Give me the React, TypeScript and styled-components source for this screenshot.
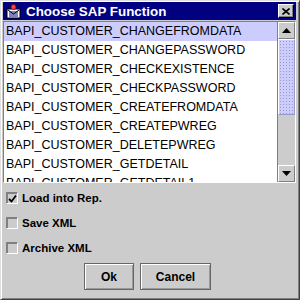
import React from "react";
import styled, { createGlobalStyle } from "styled-components";

const Global = createGlobalStyle`
  html, body { margin: 0; padding: 0; background: #cccccc; }
  * { box-sizing: border-box; }
`;

const Window = styled.div`
  width: 300px;
  height: 300px;
  background: #cccccc;
  border: 1px solid;
  border-color: #dfdfdf #404040 #404040 #dfdfdf;
  box-shadow: inset 1px 1px 0 #ffffff, inset -1px -1px 0 #808080;
  padding: 1px 3px 3px 2px;
  display: flex;
  flex-direction: column;
  overflow: hidden;
  font-family: "Liberation Sans", Arial, sans-serif;
`;

const TitleBar = styled.div`
  flex: none;
  height: 18px;
  background: #000080;
  display: flex;
  align-items: center;
  padding: 0 2px 0 3px;
  gap: 5px;
`;

const Title = styled.div`
  color: #ffffff;
  font-weight: bold;
  font-size: 13.4px;
  flex: 1;
`;

const CloseBtn = styled.div`
  width: 16px;
  height: 14px;
  background: #cccccc;
  border: 1px solid;
  border-color: #ffffff #000000 #000000 #ffffff;
  box-shadow: inset -1px -1px 0 #808080;
  display: flex;
  align-items: center;
  justify-content: center;
`;

const ListFrame = styled.div`
  flex: none;
  margin-top: 1px;
  height: 162px;
  display: flex;
  border: 1px solid;
  border-color: #808080 #ffffff #ffffff #808080;
`;

const List = styled.div`
  flex: 1;
  background: #ffffff;
  overflow: hidden;
  border-right: 1px solid #808080;
`;

const Row = styled.div<{ $sel?: boolean }>`
  height: 19px;
  line-height: 19px;
  padding-left: 2px;
  font-size: 12.5px;
  color: #000000;
  white-space: nowrap;
  background: ${(p) => (p.$sel ? "#ccccff" : "#ffffff")};
`;

const ScrollBar = styled.div`
  width: 17px;
  display: flex;
  flex-direction: column;
  background: #cccccc;
`;

const ArrowBtn = styled.div`
  height: 17px;
  background: #cccccc;
  border: 1px solid;
  border-color: #ffffff #808080 #808080 #ffffff;
  display: flex;
  align-items: center;
  justify-content: center;
`;

const Thumb = styled.div`
  height: 76px;
  background-color: #ccccff;
  background-image: radial-gradient(#9999cc 0.8px, transparent 0.9px);
  background-size: 3px 3px;
  border: 1px solid;
  border-color: #ffffff #9999cc #9999cc #ffffff;
`;

const Track = styled.div`
  flex: 1;
  background: #cccccc;
`;

const Options = styled.div`
  flex: none;
  display: flex;
  flex-direction: column;
  gap: 13px;
  padding: 9px 0 0 3px;
`;

const CheckRow = styled.div`
  display: flex;
  align-items: center;
  gap: 4px;
  height: 12px;
`;

const Box = styled.div`
  width: 12px;
  height: 12px;
  border: 1px solid;
  border-color: #808080 #ffffff #ffffff #808080;
  box-shadow: inset 1px 1px 0 #808080;
  background: #cccccc;
  display: flex;
  align-items: center;
  justify-content: center;
`;

const Label = styled.span`
  font-size: 11.5px;
  font-weight: bold;
  color: #000000;
`;

const ButtonRow = styled.div`
  flex: none;
  display: flex;
  justify-content: center;
  gap: 6px;
  margin-top: 9px;
  padding-right: 4px;
`;

const Button = styled.div<{ $w: number }>`
  width: ${(p) => p.$w}px;
  height: 27px;
  border: 1px solid #666666;
  box-shadow: inset 1px 1px 0 #ffffff, inset -1px -1px 0 #999999;
  background: #cccccc;
  display: flex;
  align-items: center;
  justify-content: center;
  font-size: 12px;
  font-weight: bold;
  color: #000000;
`;

const items = [
  "BAPI_CUSTOMER_CHANGEFROMDATA",
  "BAPI_CUSTOMER_CHANGEPASSWORD",
  "BAPI_CUSTOMER_CHECKEXISTENCE",
  "BAPI_CUSTOMER_CHECKPASSWORD",
  "BAPI_CUSTOMER_CREATEFROMDATA",
  "BAPI_CUSTOMER_CREATEPWREG",
  "BAPI_CUSTOMER_DELETEPWREG",
  "BAPI_CUSTOMER_GETDETAIL",
  "BAPI_CUSTOMER_GETDETAIL1",
];

const AppIcon = () => (
  <svg width="15" height="15" viewBox="0 0 15 15">
    <rect x="1" y="5" width="13" height="9" fill="#ffffff" stroke="#000000" strokeWidth="1" />
    <path d="M3 8h9M3 10h9M3 12h9" stroke="#000080" strokeWidth="1" />
    <circle cx="7.5" cy="3" r="2.5" fill="#ff4040" stroke="#800000" strokeWidth="0.8" />
    <path d="M2 6 L7.5 10 L13 6" stroke="#000000" fill="none" strokeWidth="1" />
  </svg>
);

export default function App() {
  return (
    <>
      <Global />
      <Window>
        <TitleBar>
          <AppIcon />
          <Title>Choose SAP Function</Title>
          <CloseBtn>
            <svg width="8" height="7" viewBox="0 0 8 7">
              <path d="M0.5 0.5 L7.5 6.5 M7.5 0.5 L0.5 6.5" stroke="#000" strokeWidth="1.6" />
            </svg>
          </CloseBtn>
        </TitleBar>
        <ListFrame>
          <List>
            {items.map((t, i) => (
              <Row key={t} $sel={i === 0}>
                {t}
              </Row>
            ))}
          </List>
          <ScrollBar>
            <ArrowBtn>
              <svg width="9" height="5" viewBox="0 0 9 5">
                <path d="M4.5 0 L9 5 L0 5 Z" fill="#000" />
              </svg>
            </ArrowBtn>
            <Thumb />
            <Track />
            <ArrowBtn>
              <svg width="9" height="5" viewBox="0 0 9 5">
                <path d="M0 0 L9 0 L4.5 5 Z" fill="#000" />
              </svg>
            </ArrowBtn>
          </ScrollBar>
        </ListFrame>
        <Options>
          <CheckRow>
            <Box>
              <svg width="9" height="9" viewBox="0 0 9 9">
                <path d="M1 5 L3.5 7.5 L8 1.5" stroke="#000" strokeWidth="1.8" fill="none" />
              </svg>
            </Box>
            <Label>Load into Rep.</Label>
          </CheckRow>
          <CheckRow>
            <Box />
            <Label>Save XML</Label>
          </CheckRow>
          <CheckRow>
            <Box />
            <Label>Archive XML</Label>
          </CheckRow>
        </Options>
        <ButtonRow>
          <Button $w={50}>Ok</Button>
          <Button $w={71}>Cancel</Button>
        </ButtonRow>
      </Window>
    </>
  );
}
